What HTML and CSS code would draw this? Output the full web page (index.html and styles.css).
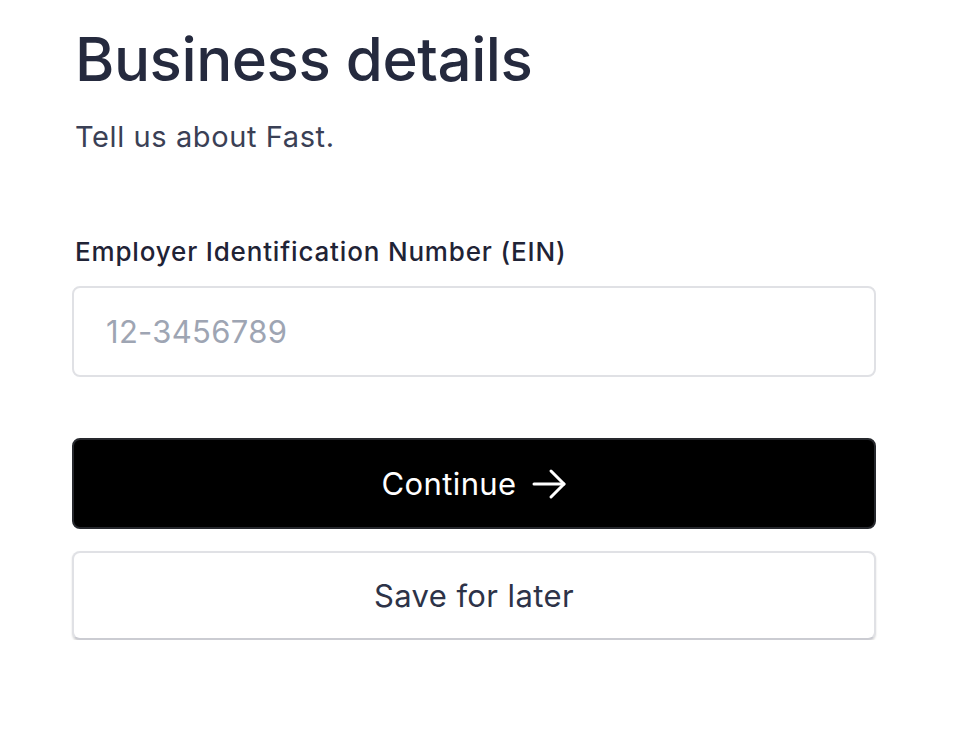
FILE: index.html
```html
<!DOCTYPE html>
<html lang="en">
<head>
<meta charset="utf-8">
<title>Business details</title>
<link rel="stylesheet" href="styles.css">
</head>
<body>
<main class="page">
  <h1 class="title">Business details</h1>
  <p class="subtitle">Tell us about Fast.</p>
  <form class="form">
    <label class="label" for="ein">Employer Identification Number (EIN)</label>
    <input class="input" id="ein" type="text" placeholder="12-3456789">
    <div class="actions">
      <button type="button" class="btn btn-primary">Continue
        <svg class="arrow" width="36" height="32" viewBox="0 0 36 32" fill="none" stroke="currentColor" stroke-width="3" stroke-linecap="round" stroke-linejoin="round"><path d="M3 16h30"/><path d="M20 3l13 13-13 13"/></svg>
      </button>
      <button type="button" class="btn btn-secondary">Save for later</button>
    </div>
  </form>
</main>
</body>
</html>
```
FILE: styles.css
```css
* { box-sizing: border-box; }
html, body { margin: 0; padding: 0; background: #fff; }
body { font-family: Inter, "Noto Sans", "Liberation Sans", sans-serif; color: #252a3e; }
.page { width: 804px; margin-left: 72px; padding-top: 21px; }
.title { margin: 0 0 0 3px; font-size: 60px; font-weight: 500; line-height: 76px; letter-spacing: -0.45px; color: #252a3e; }
.subtitle { margin: 22px 0 0 3px; font-size: 29px; line-height: 36px; letter-spacing: 0.6px; color: #3a4055; }
.form { margin-top: 81px; display: flex; flex-direction: column; }
.label { margin-left: 3px; font-size: 26px; font-weight: 500; line-height: 32px; letter-spacing: 0.83px; color: #1f2336; }
.input { margin-top: 18px; height: 91px; width: 100%; border: 2px solid #e0e1e5; border-radius: 8px; padding: 0 32px; font-family: inherit; font-size: 31px; letter-spacing: 0.3px; color: #252a3e; outline: none; }
.input::placeholder { color: #9ea5b3; }
.actions { margin-top: 61px; display: flex; flex-direction: column; gap: 22px; }
.btn { height: 91px; width: 100%; border-radius: 8px; font-family: inherit; font-size: 31px; letter-spacing: 0.4px; display: flex; align-items: center; justify-content: center; gap: 14px; cursor: pointer; }
.btn-primary { background: #000; color: #fff; border: 2px solid #26282d; }
.btn-secondary { height: 89px; background: #fff; color: #2d3348; border: 2px solid #e0e1e5; border-bottom-color: #cbccd2; box-shadow: 0 1.5px 2px rgba(0,0,0,0.14); }
.arrow { display: block; margin-top: 1px; }
```
